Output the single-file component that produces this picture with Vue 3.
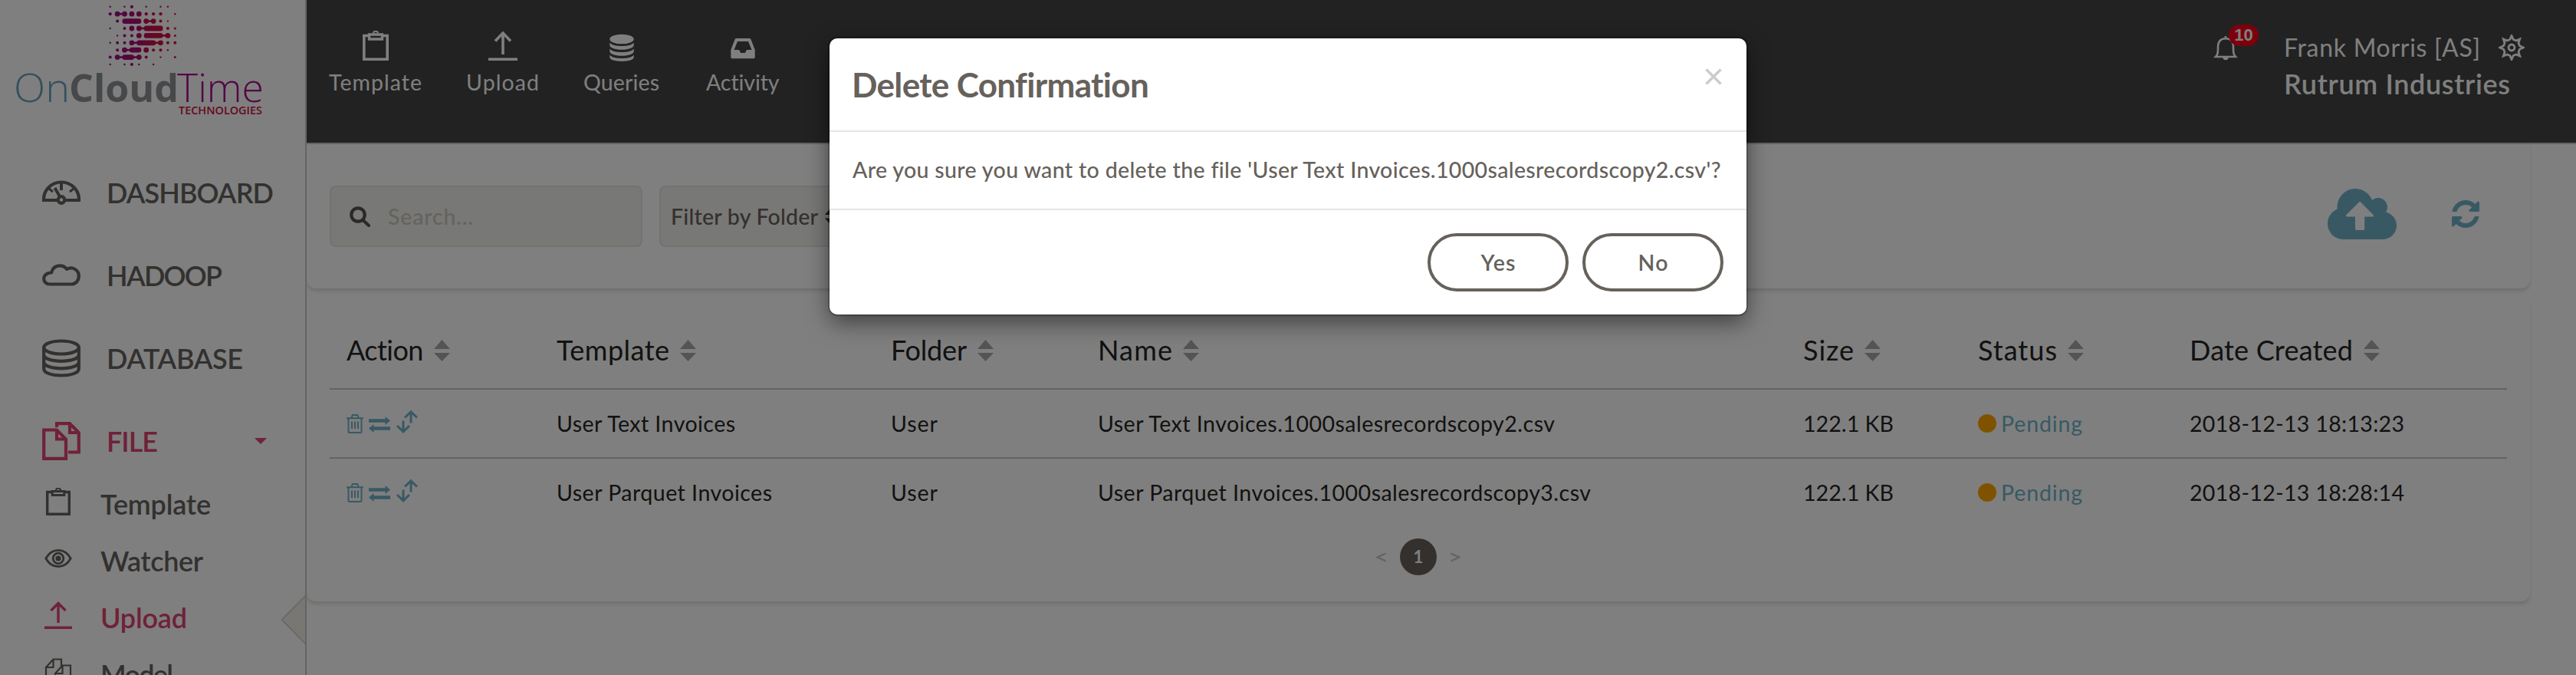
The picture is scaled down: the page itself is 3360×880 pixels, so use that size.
<script setup>
// Logo dot matrix: column, row, radius
const logoDots = [
  [0,0,1.2],[2,0,1.2],[3,0,2.1],[5,0,1.2],[7,0,1.2],[8,0,1.2],
  [0,1,2.1],[1,1,3.4],[2,1,3.4],[3,1,3.4],[4,1,3.4],[5,1,2.1],[6,1,2.1],[7,1,2.1],[9,1,1.2],
  [1,2,2],[5,2,3.4],[6,2,3.4],[7,2,2],[8,2,1.2],
  [0,3,1.2],[2,3,2],[3,3,3.4],[4,3,3.4],[8,3,2],[9,3,1.5],
  [1,4,1.2],[2,4,2],[3,4,2],[4,4,3.4],[8,4,3.4],[9,4,1.5],
  [0,5,1.2],[1,5,2],[2,5,2],[3,5,3.4],[7,5,3.4],[8,5,2],[9,5,2],
  [1,6,2],[2,6,3.4],[5,6,3.4],[6,6,2],[7,6,2],[8,6,1.2],
  [0,7,2],[1,7,3.4],[4,7,3.4],[5,7,2],[7,7,1.2],[9,7,1.5],
  [0,8,1.2],[2,8,1.3],[3,8,2.1],[4,8,1.3],[6,8,1.3],
]
// Thick bars: first column, last column, row
const logoBars = [[2,4,2],[5,7,3],[5,7,4],[4,6,5],[3,4,6],[2,3,7]]
// Thin connectors: first column, last column, row
const logoLinks = [[1,2,1],[5,6,2],[4,5,3],[7,8,4],[3,4,5],[6,7,5],[2,3,6],[1,2,7],[3,4,7]]
const gx = (c) => 143.7 + c * 9.4
const gy = (r) => 8.8 + r * 9.4

const mainNav = [
  { label: 'DASHBOARD', icon: 'gauge', w: 218 },
  { label: 'HADOOP', icon: 'cloud', w: 151 },
  { label: 'DATABASE', icon: 'db', w: 178 },
  { label: 'FILE', icon: 'files', w: 67, active: true },
]
const subNav = [
  { label: 'Template', icon: 'clip', w: 144 },
  { label: 'Watcher', icon: 'eye', w: 134 },
  { label: 'Upload', icon: 'upload', w: 113, active: true },
  { label: 'Model', icon: 'model', w: 95 },
]
const columns = [
  { label: 'Action', w: 101 },
  { label: 'Template', w: 147 },
  { label: 'Folder', w: 99 },
  { label: 'Name', w: 97 },
  { label: 'Size', w: 66 },
  { label: 'Status', w: 103 },
  { label: 'Date Created', w: 213 },
]
const rows = [
  { template: 'User Text Invoices', tw: 233, file: 'User Text Invoices.1000salesrecordscopy2.csv', fw: 596, date: '2018-12-13 18:13:23' },
  { template: 'User Parquet Invoices', tw: 281, file: 'User Parquet Invoices.1000salesrecordscopy3.csv', fw: 643, date: '2018-12-13 18:28:14' },
]

// Tracks a label out so that it spans the given advance width
const vFit = {
  mounted(el, { value }) {
    const n = el.textContent.trim().length
    const natural = el.getBoundingClientRect().width
    const gap = (value - natural) / (n - 1)
    el.style.letterSpacing = gap.toFixed(3) + 'px'
    el.style.marginRight = (-gap).toFixed(3) + 'px'
  },
}
</script>

<template>
  <div class="app">
    <aside class="sidebar">
      <svg class="logo" width="398" height="160" viewBox="0 0 398 160">
        <defs>
          <linearGradient id="lg" gradientUnits="userSpaceOnUse" x1="142" y1="0" x2="230" y2="0">
            <stop offset="0" stop-color="#a0108a" />
            <stop offset=".4" stop-color="#ac0c74" />
            <stop offset=".65" stop-color="#cc104c" />
            <stop offset="1" stop-color="#d41038" />
          </linearGradient>
        </defs>
        <g fill="url(#lg)">
          <circle v-for="(d, i) in logoDots" :key="'d' + i" :cx="gx(d[0])" :cy="gy(d[1])" :r="d[2]" />
          <rect v-for="(b, i) in logoBars" :key="'b' + i" :x="gx(b[0]) - 3" :y="gy(b[2]) - 3.4" :width="(b[1] - b[0]) * 9.4 + 6" height="6.8" rx="3" />
          <rect v-for="(b, i) in logoLinks" :key="'l' + i" :x="gx(b[0])" :y="gy(b[2]) - 1.3" :width="(b[1] - b[0]) * 9.4" height="2.6" />
        </g>
        <text class="l-thin" x="18" y="132.6" fill="#68a0b8" textLength="73" lengthAdjust="spacingAndGlyphs">On</text>
        <text class="l-bold" x="90" y="132.6" fill="#8e9094" textLength="143" lengthAdjust="spacingAndGlyphs">Cloud</text>
        <text class="l-thin" x="231" y="132.6" fill="#a80c88" textLength="113" lengthAdjust="spacingAndGlyphs">Time</text>
        <text class="l-tech" x="233" y="149" fill="#cc1040" textLength="109" lengthAdjust="spacingAndGlyphs">TECHNOLOGIES</text>
      </svg>

      <nav class="main-nav">
        <div v-for="n in mainNav" :key="n.label" class="nav-item" :class="{ active: n.active }">
          <svg v-if="n.icon === 'gauge'" class="ico" viewBox="0 0 50 32" width="50" height="32" fill="none" stroke="currentColor">
            <path d="M2 26V25A23 22.5 0 0 1 48 25V26Z" stroke-width="4.2" />
            <path d="M25 3V13M16.500 10L24 23" stroke-width="4" />
            <path d="M9 11l5 4M41 11l-5 4" stroke-width="3" />
            <circle cx="25" cy="25.500" r="4.300" stroke-width="4.200" fill="#fff" />
          </svg>
          <svg v-else-if="n.icon === 'cloud'" class="ico" viewBox="0 0 50 30" width="50" height="30" fill="none" stroke="currentColor" stroke-width="4.200">
            <path d="M9.500 26.500C5 26.500 2.200 23 2.200 19.500C2.200 15 6 11.500 12 11.500C13.500 5.500 17.500 2.300 23 2.300C27 2.300 30 4 32 6.800C40 3 47.800 8 47.800 16C47.800 22 43.500 26.500 38 26.500Z" stroke-linejoin="round" />
          </svg>
          <svg v-else-if="n.icon === 'db'" class="ico" viewBox="0 0 50 50" width="50" height="50" fill="none" stroke="currentColor" stroke-width="4.200">
            <ellipse cx="25" cy="11" rx="22.800" ry="8.500" />
            <path d="M2.200 11v28c0 5 10 8.500 22.800 8.500S47.800 44 47.800 39V11M2.200 20.500c0 5 10 8.300 22.800 8.300s22.800-3.300 22.800-8.300M2.200 30c0 5 10 8.300 22.800 8.300S47.800 35 47.800 30" />
          </svg>
          <svg v-else class="ico" viewBox="0 0 50 50" width="50" height="50" fill="none" stroke="currentColor" stroke-width="4.200">
            <path d="M2.200 10.500H19L31 22.500V47.800H2.200Z" />
            <path d="M19 10v12.500h12M36 2v12h12M19 7V2.200H36L47.800 14V39.500H34" />
          </svg>
          <span v-fit="n.w">{{ n.label }}</span>
          <i v-if="n.active" class="caret"></i>
        </div>
      </nav>

      <nav class="sub-nav">
        <div v-for="n in subNav" :key="n.label" class="sub-item" :class="{ active: n.active }">
          <svg v-if="n.icon === 'clip'" class="ico" viewBox="0 0 36 36" width="36" height="36" fill="none" stroke="currentColor" stroke-width="3.400">
            <path d="M9 5.500H3.700V34.300H32.300V5.500H27" />
            <path d="M10.200 4.500H25.800V9.500H10.200Z" stroke-width="3" />
            <path d="M15 3a3 2.500 0 0 1 6 0" stroke-width="2" />
          </svg>
          <svg v-else-if="n.icon === 'eye'" class="ico" viewBox="0 0 36 26" width="36" height="26" fill="none" stroke="currentColor" stroke-width="2.800">
            <path d="M1.800 13C6 5.500 11 2.400 18 2.400S30 5.500 34.200 13C30 20.500 25 23.600 18 23.600S6 20.500 1.800 13Z" />
            <circle cx="18" cy="13" r="6.800" />
            <circle cx="18" cy="13" r="3.600" fill="currentColor" stroke="none" />
          </svg>
          <svg v-else-if="n.icon === 'upload'" class="ico" viewBox="0 0 36 36" width="36" height="36" fill="none" stroke="currentColor" stroke-width="3.400">
            <path d="M0 34.300H36M18 28V3M8.500 12L18 2.500L27.500 12" />
          </svg>
          <svg v-else class="ico" viewBox="0 0 36 36" width="36" height="36" fill="none" stroke="currentColor" stroke-width="2.200">
            <path d="M14 26H2V12L11.500 1.500H22V10M2 12H11.500V1.500M14 35V20L23.500 9.500H34V35ZM14 20H23.500V9.500" />
          </svg>
          <span v-fit="n.w">{{ n.label }}</span>
        </div>
      </nav>
      <svg class="pointer" width="34" height="68" viewBox="0 0 34 68">
        <path d="M34 1L1.500 34L34 67Z" fill="#f0eee8" />
        <path d="M33 2L1.500 34L33 66" fill="none" stroke="#ccc9c4" stroke-width="1.500" />
      </svg>
    </aside>

    <main class="main">
      <header class="topbar">
        <div class="tools">
          <div class="tool">
            <svg width="34" height="40" viewBox="0 0 34 40" fill="none" stroke="currentColor" stroke-width="3.600">
              <path d="M8 6.500H1.800V37.200H32.200V6.500H26" />
              <path d="M8.500 5H25.500V11H8.500Z" stroke-width="3.400" />
              <path d="M14 3.500a3 2.800 0 0 1 6 0" stroke-width="2" />
            </svg>
            <span v-fit="121">Template</span>
          </div>
          <div class="tool">
            <svg width="38" height="40" viewBox="0 0 38 40" fill="none" stroke="currentColor" stroke-width="3.600">
              <path d="M0 37.200H38M19 31V4M9 13.500L19 3L29 13.500" />
            </svg>
            <span v-fit="95">Upload</span>
          </div>
          <div class="tool">
            <svg width="32" height="40" viewBox="0 0 32 40" fill="currentColor">
              <ellipse cx="16" cy="11" rx="15.700" ry="6.300" />
              <path d="M.3 15.500c2.500 3.300 8 4.600 15.700 4.600s13.200-1.300 15.700-4.600v3.200c0 3.500-6.500 6-15.700 6S.3 22.200.3 18.700ZM.3 23.500c2.500 3.300 8 4.600 15.700 4.600s13.200-1.300 15.700-4.600v3.200c0 3.500-6.500 6-15.700 6S.3 30.200.3 26.700ZM.3 31.500c2.500 3.300 8 4.600 15.700 4.600s13.200-1.300 15.700-4.600v3c0 3.500-6.500 5.400-15.700 5.400S.3 38 .3 34.500Z" />
            </svg>
            <span v-fit="99">Queries</span>
          </div>
          <div class="tool last">
            <svg width="32" height="40" viewBox="0 0 32 40" fill="currentColor">
              <path fill-rule="evenodd" d="M7.500 10h17c1 0 1.700.5 2 1.500L31.700 25v9.500c0 1-.7 1.700-1.700 1.700H2c-1 0-1.700-.7-1.700-1.700V25L5.500 11.500C5.800 10.500 6.500 10 7.500 10ZM9 14L4.500 25H11l2.200 4h5.600l2.200-4h6.500L23 14Z" />
            </svg>
            <span v-fit="96">Activity</span>
          </div>
        </div>
        <div class="account">
          <div class="bell">
            <svg width="32" height="32" viewBox="0 0 32 32" fill="none" stroke="currentColor" stroke-width="2.600">
              <path d="M16 0v3M3 27C6 24 6 21 6 14C6 7 9.500 3.300 16 3.300S26 7 26 14c0 7 0 10 3 13Z" />
              <path d="M12.500 28a3.500 3.300 0 0 0 7 0Z" fill="currentColor" stroke="none" />
            </svg>
            <b class="badge">10</b>
          </div>
          <div class="who">
            <div class="user"><span v-fit="256">Frank Morris [AS]</span></div>
            <div class="org"><span v-fit="295">Rutrum Industries</span></div>
          </div>
          <svg class="gear" width="34" height="34" viewBox="-17 -17 34 34" fill="none" stroke="currentColor" stroke-width="2.800">
            <path d="M-2.200-10.500L0-15.500L2.200-10.500L5.900-9L10.700-11L9-5.900L10.500-2.200L15.500 0L10.500 2.200L9 5.900L10.700 11L5.900 9L2.200 10.500L0 15.500L-2.200 10.500L-5.900 9L-10.700 11L-9 5.900L-10.500 2.200L-15.500 0L-10.500-2.200L-9-5.900L-10.700-11L-5.900-9Z" />
            <circle r="4" />
          </svg>
        </div>
      </header>

      <section class="card filters">
        <div class="search">
          <svg width="27" height="27" viewBox="0 0 27 27" fill="none" stroke="currentColor" stroke-width="4.200">
            <circle cx="11" cy="11" r="8.700" />
            <path d="M17 17.500L25 25" stroke-linecap="round" stroke-width="4" />
          </svg>
          <span v-fit="111">Search...</span>
        </div>
        <div class="folder">
          <span v-fit="192">Filter by Folder</span>
          <svg class="sort" width="21" height="28" viewBox="0 0 21 28"><path d="M10.500 0L21 12H0ZM10.500 28L21 16.500H0Z" /></svg>
        </div>
        <svg class="cloudup" width="90" height="66" viewBox="0 0 90 66">
          <path fill-rule="evenodd" d="M20 66C9 66 0 57 0 45.500C0 37 5 30 12.500 26.500V24C12.500 11 23 0 36 0C46 0 54.500 6 58 15C60.500 13 63 12 66 12C72.500 12 78 17.500 78 24C78 26.500 77.300 28.700 76 30.500C84 32.500 90 39.500 90 48C90 58 82 66 72 66ZM42 16.500L24.500 34C23.500 35 24 36.500 25.500 36.500H36V52C36 53.300 36.700 54 38 54H46.500C47.500 54 48.200 53.300 48.200 52V36.500H58.500C60 36.500 60.500 35 59.500 34Z" />
        </svg>
        <svg class="refresh" width="36" height="36" viewBox="0 0 1536 1536">
          <path d="M1511 928q0 5-1 7-64 268-268 434.500T764 1536q-146 0-282.500-55T238 1324l-129 129q-19 19-45 19t-45-19-19-45V960q0-26 19-45t45-19h448q26 0 45 19t19 45-19 45l-137 137q71 66 161 102t187 36q134 0 250-65t186-179q11-17 53-117 8-23 30-23h192q13 0 22.500 9.500t9.500 22.500zm25-800v448q0 26-19 45t-45 19h-448q-26 0-45-19t-19-45 19-45l138-138Q969 256 768 256q-134 0-250 65T332 500q-11 17-53 117-8 23-30 23H50q-13 0-22.500-9.500T18 608v-7q65-268 270-434.500T768 0q146 0 284 55.500T1297 212l130-129q19-19 45-19t45 19 19 45z" />
        </svg>
      </section>

      <section class="card listing">
        <div class="row head">
          <div v-for="c in columns" :key="c.label" class="cell">
            <span v-fit="c.w">{{ c.label }}</span>
            <svg class="sort" width="21" height="28" viewBox="0 0 21 28"><path d="M10.500 0L21 12H0ZM10.500 28L21 17H0Z" /></svg>
          </div>
        </div>
        <div v-for="r in rows" :key="r.date" class="row">
          <div class="cell actions">
            <svg width="22" height="25" viewBox="0 0 22 25" fill="none" stroke="currentColor" stroke-width="2">
              <path d="M0 5.300H22M2.500 5.300V22.500q0 1.500 1.500 1.500H18q1.500 0 1.500-1.500V5.300M6.500 5L7.500 1.500q.3-.6 1-.6h5q.7 0 1 .6L15.500 5M7 9.500V19M11 9.500V19M15 9.500V19" />
            </svg>
            <svg class="swap" width="28" height="21" viewBox="0 0 28 21" fill="currentColor">
              <path d="M0 3.300H21.500V0L28 5.500L21.500 11V7.700H0ZM28 13.300H6.500V10L0 15.500L6.500 21V17.700H28Z" />
            </svg>
            <svg class="updown" width="28" height="30" viewBox="0 0 28 30" fill="none" stroke="currentColor" stroke-width="3">
              <path d="M19 16.500V2M11 9.500L19 1.800L27 9.500M9 13.500V28M1 20L9 27.800L17 20" />
            </svg>
          </div>
          <div class="cell"><span v-fit="r.tw">{{ r.template }}</span></div>
          <div class="cell"><span v-fit="61">User</span></div>
          <div class="cell"><span v-fit="r.fw">{{ r.file }}</span></div>
          <div class="cell"><span v-fit="118">122.1 KB</span></div>
          <div class="cell status"><i></i><span v-fit="106">Pending</span></div>
          <div class="cell"><span v-fit="280">{{ r.date }}</span></div>
        </div>
        <div class="pager">
          <svg width="13" height="13" viewBox="0 0 13 13"><path d="M12.500 1.500L1.500 6.500L12.500 11.500" /></svg>
          <b>1</b>
          <svg width="13" height="13" viewBox="0 0 13 13"><path d="M.5 1.500L11.500 6.500L.5 11.500" /></svg>
        </div>
      </section>
    </main>

    <div class="backdrop">
      <div class="modal">
        <div class="m-head">
          <h4><span v-fit="388">Delete Confirmation</span></h4>
          <svg width="22" height="22" viewBox="0 0 22 22"><path d="M1.500 1.500L20.500 20.500M20.500 1.500L1.500 20.500" /></svg>
        </div>
        <div class="m-body"><span v-fit="1132">Are you sure you want to delete the file 'User Text Invoices.1000salesrecordscopy2.csv'?</span></div>
        <div class="m-foot">
          <button><span v-fit="45">Yes</span></button>
          <button><span v-fit="39">No</span></button>
        </div>
      </div>
    </div>
  </div>
</template>

<style>
body { margin: 0; overflow: hidden; }
</style>

<style scoped>
.app {
  position: relative;
  display: flex;
  width: 3360px;
  height: 880px;
  overflow: hidden;
  background: #fff;
  color: #252422;
  font-family: Lato, "Open Sans", sans-serif;
  font-size: 28.5px;
  white-space: nowrap;
}
svg { display: block; flex: none; }
span { display: inline-block; }

.sidebar {
  position: relative;
  box-sizing: border-box;
  width: 400px;
  height: 880px;
  flex: none;
  overflow: hidden;
  border-right: 2px solid #ccc9c6;
  background: #fff;
  color: #66635f;
  font-size: 36px;
  font-weight: 600;
}
.l-thin { font: 300 51.500px "Open Sans", sans-serif; }
.l-bold { font: 700 50px "Open Sans", sans-serif; }
.l-tech { font: 600 14.500px "Open Sans", sans-serif; }
.main-nav { display: flex; flex-direction: column; gap: 48px; margin-top: 61px; padding-left: 55px; }
.nav-item { display: flex; align-items: center; height: 60px; }
.nav-item .ico { margin-right: 34px; }
.nav-item.active, .sub-item.active { color: #de4470; }
.caret {
  margin-left: 126px;
  border: 8px solid transparent;
  border-top-color: currentColor;
  border-bottom: 0;
}
.sub-nav { display: flex; flex-direction: column; margin-top: 15px; padding-left: 58px; }
.sub-item { display: flex; align-items: center; height: 74px; flex: none; }
.sub-item .ico { margin: 0 37px 7px 0; }
.pointer { position: absolute; right: -2px; top: 774px; }

.main { width: 2960px; flex: none; }
.topbar {
  box-sizing: border-box;
  display: flex;
  justify-content: space-between;
  height: 188px;
  border-bottom: 2px solid #ccc9c6;
  background: #444;
  color: #fff;
}
.tools { display: flex; padding: 40px 0 0 29px; gap: 58px; }
.tool { display: flex; flex-direction: column; align-items: center; gap: 9px; line-height: 36px; }
.tool.last { margin-left: 3px; }
.account { display: flex; padding: 26px 67px 0 0; }
.bell { position: relative; width: 92px; padding-top: 21px; }
.badge {
  position: absolute;
  left: 20px;
  top: 6px;
  width: 39px;
  height: 28px;
  border-radius: 14px;
  background: #f80016;
  font: 700 22px/28px "Liberation Sans", Arial, sans-serif;
  text-align: center;
}
.who { width: 280px; }
.user { font-size: 32px; line-height: 70px; padding-top: 1px; }
.org { font-size: 36px; font-weight: 600; line-height: 36px; margin-top: -6px; }
.gear { margin-top: 19px; }

.card {
  box-sizing: border-box;
  width: 2900px;
  border-radius: 12px;
  background: #fff;
  box-shadow: 0 4px 4px rgba(204, 197, 185, .5);
}
.filters { display: flex; height: 188px; padding: 54px 0 0 30px; border-radius: 0 0 12px 12px; }
.search, .folder {
  box-sizing: border-box;
  display: flex;
  align-items: center;
  height: 80px;
  border: 2px solid #e6e4df;
  border-radius: 8px;
  background: #f1f0ec;
  font-weight: 500;
}
.search { width: 408px; padding-left: 24px; gap: 23px; color: #cbc6c0; }
.search svg { color: #55524e; }
.folder { width: 420px; margin-left: 22px; padding-left: 13px; gap: 9px; color: #66615b; }
.folder .sort { fill: #333; }
.cloudup { margin: 4px 0 0 1756px; fill: #70b2c8; }
.refresh { margin: 19px 0 0 72px; fill: #70b2c8; }

.listing { height: 392px; margin-top: 16px; padding: 14px 30px 0; }
.row {
  display: grid;
  grid-template-columns: 274px 436px 270px 920px 228px 276px 1fr;
  align-items: center;
  height: 88px;
  padding-left: 22px;
  border-bottom: 2px solid #ccc5b9;
}
.row:nth-child(3) { border-bottom: 0; }
.head { height: 100px; font-size: 36px; }
.cell { display: flex; align-items: center; }
.head .sort { margin-left: 14px; margin-top: 2px; fill: #a8a8a8; }
.actions { color: #70b2c8; }
.swap { margin: 2px 8px 0 7px; }
.updown { margin-top: -5px; }
.status { color: #70b2c8; }
.status i { width: 24px; height: 24px; margin-right: 6px; border-radius: 50%; background: #ffa500; }
.pager { display: flex; align-items: center; justify-content: center; height: 48px; margin-top: 16px; gap: 18px; }
.pager b {
  width: 48px;
  border-radius: 50%;
  background: #66615b;
  color: #fff;
  font-size: 22px;
  line-height: 48px;
  text-align: center;
}
.pager svg { fill: none; stroke: #ccc5b9; stroke-width: 2.200; }

.backdrop {
  position: absolute;
  inset: 0;
  display: flex;
  justify-content: center;
  align-items: flex-start;
  background: rgba(0, 0, 0, .5);
}
.modal {
  width: 1196px;
  height: 360px;
  margin-top: 50px;
  border-radius: 10px;
  background: #fff;
  color: #66615b;
  box-shadow: 0 0 0 2px rgba(0, 0, 0, .2), 0 10px 30px rgba(0, 0, 0, .5);
}
.m-head { display: flex; justify-content: space-between; height: 120px; padding: 0 32px 0 29px; border-bottom: 2px solid #e5e5e5; }
.m-head h4 { margin: 0; font-size: 44px; font-weight: 700; line-height: 120px; }
.m-head svg { margin-top: 39px; fill: none; stroke: #ccc; stroke-width: 3.400; }
.m-body { height: 100px; padding-left: 30px; border-bottom: 2px solid #e5e5e5; font-weight: 500; line-height: 99px; }
.m-foot { display: flex; justify-content: flex-end; gap: 18px; padding: 30px 30px 0; }
.m-foot button {
  box-sizing: border-box;
  width: 184px;
  height: 76px;
  padding: 0;
  border: 4px solid #66615b;
  border-radius: 38px;
  background: transparent;
  color: #66615b;
  font: 600 28.500px Lato, sans-serif;
}
</style>
